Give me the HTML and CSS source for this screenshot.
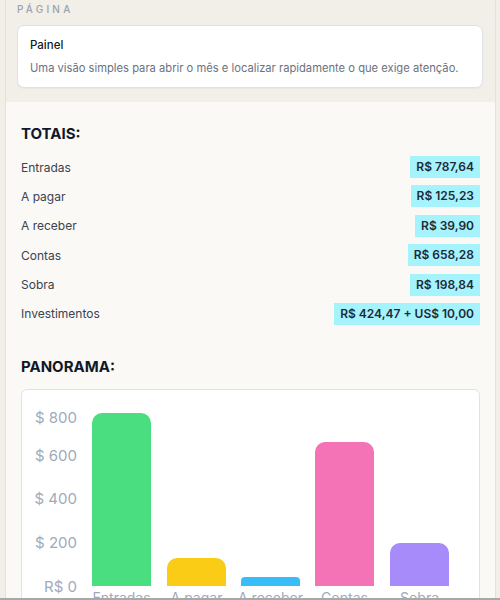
FILE: index.html
```html
<!DOCTYPE html>
<html lang="pt-BR">
<head>
<meta charset="utf-8">
<title>Painel</title>
<link rel="stylesheet" href="styles.css">
</head>
<body>
<div class="panel">
  <header class="page-head">
    <div class="eyebrow">PÁGINA</div>
    <div class="page-card">
      <div class="page-title">Painel</div>
      <div class="page-desc">Uma visão simples para abrir o mês e localizar rapidamente o que exige atenção.</div>
    </div>
  </header>
  <main class="content">
    <h2 class="section-title">TOTAIS:</h2>
    <ul class="totals">
      <li class="row"><span class="label">Entradas</span><span class="value">R$ 787,64</span></li>
      <li class="row"><span class="label">A pagar</span><span class="value">R$ 125,23</span></li>
      <li class="row"><span class="label">A receber</span><span class="value">R$ 39,90</span></li>
      <li class="row"><span class="label">Contas</span><span class="value">R$ 658,28</span></li>
      <li class="row"><span class="label">Sobra</span><span class="value">R$ 198,84</span></li>
      <li class="row"><span class="label">Investimentos</span><span class="value">R$ 424,47 + US$ 10,00</span></li>
    </ul>
    <h2 class="section-title panorama">PANORAMA:</h2>
    <div class="chart-card">
      <svg class="chart" width="456" height="230" viewBox="0 0 456 230">
        <g class="ylabels">
          <text x="55" y="32.5">$ 800</text>
          <text x="55" y="70.5">$ 600</text>
          <text x="55" y="113.5">$ 400</text>
          <text x="55" y="157.5">$ 200</text>
          <text x="55" y="201.5">R$ 0</text>
        </g>
        <path fill="#4ade80" d="M70 196 V33 a10 10 0 0 1 10 -10 h39 a10 10 0 0 1 10 10 V196 Z"/>
        <path fill="#facc15" d="M145 196 V178 a10 10 0 0 1 10 -10 h39 a10 10 0 0 1 10 10 V196 Z"/>
        <path fill="#38bdf8" d="M219 196 V191 a4 4 0 0 1 4 -4 h51 a4 4 0 0 1 4 4 V196 Z"/>
        <path fill="#f472b6" d="M293 196 V62 a10 10 0 0 1 10 -10 h39 a10 10 0 0 1 10 10 V196 Z"/>
        <path fill="#a78bfa" d="M368 196 V163 a10 10 0 0 1 10 -10 h39 a10 10 0 0 1 10 10 V196 Z"/>
        <g class="xlabels">
          <text x="99.5" y="213">Entradas</text>
          <text x="174.5" y="213">A pagar</text>
          <text x="248.5" y="213">A receber</text>
          <text x="322.5" y="213">Contas</text>
          <text x="397.5" y="213">Sobra</text>
        </g>
      </svg>
    </div>
  </main>
</div>
<div class="bottom-edge"></div>
</body>
</html>
```
FILE: styles.css
```css
html, body {
  margin: 0;
  padding: 0;
}
body {
  background: #f2efe9;
  font-family: Inter, "Noto Sans", "Liberation Sans", sans-serif;
  height: 600px;
  overflow: hidden;
}
.panel {
  margin-left: 5px;
  width: 489px;
  border-left: 1px solid #dde1e6;
  border-right: 1px solid #dfe3e9;
  background: #faf9f6;
  min-height: 600px;
}
.page-head {
  background: #f2efe9;
  padding: 2px 12px 14px 11px;
}
.eyebrow {
  font-size: 10px;
  letter-spacing: 3.2px;
  color: #9aa2ac;
  line-height: 14px;
  font-weight: 500;
}
.page-card {
  margin-top: 9px;
  background: #fff;
  border: 1px solid #dde2e8;
  border-radius: 7px;
  padding: 11px 12px 11px 12px;
  box-shadow: 0 1px 1px rgba(0,0,0,0.03);
}
.page-title {
  font-size: 11.5px;
  font-weight: 500;
  color: #111827;
  line-height: 16px;
}
.page-desc {
  margin-top: 7px;
  font-size: 11.2px;
  color: #6b7280;
  line-height: 16px;
  white-space: nowrap;
}
.content {
  padding: 22px 15px 0 15px;
}
.section-title {
  margin: 0;
  font-size: 15px;
  font-weight: 700;
  color: #111827;
  line-height: 20px;
}
.totals {
  list-style: none;
  margin: 12px 0 0 0;
  padding: 0;
}
.row {
  display: flex;
  justify-content: space-between;
  align-items: center;
  height: 22px;
  margin-bottom: 7.4px;
}
.row:last-child {
  margin-bottom: 0;
}
.label {
  font-size: 12px;
  color: #3b4250;
}
.value {
  background: #a5f3fc;
  color: #1f2937;
  font-weight: 600;
  font-size: 12px;
  line-height: 22px;
  padding: 0 6px;
}
.panorama {
  margin-top: 32px;
}
.chart-card {
  margin-top: 12px;
  background: #fff;
  border: 1px solid #dbe3ec;
  border-radius: 6px;
  height: 240px;
  overflow: hidden;
}
.chart {
  display: block;
}
.ylabels text {
  font-size: 15px;
  fill: #a0aabb;
  text-anchor: end;
  font-family: Inter, "Noto Sans", sans-serif;
}
.xlabels text {
  font-size: 14px;
  fill: #a0aabb;
  text-anchor: middle;
  font-family: Inter, "Noto Sans", sans-serif;
}
.bottom-edge {
  position: fixed;
  left: 0;
  right: 0;
  bottom: 0;
  height: 2px;
  background: #a8a8a8;
}
```
